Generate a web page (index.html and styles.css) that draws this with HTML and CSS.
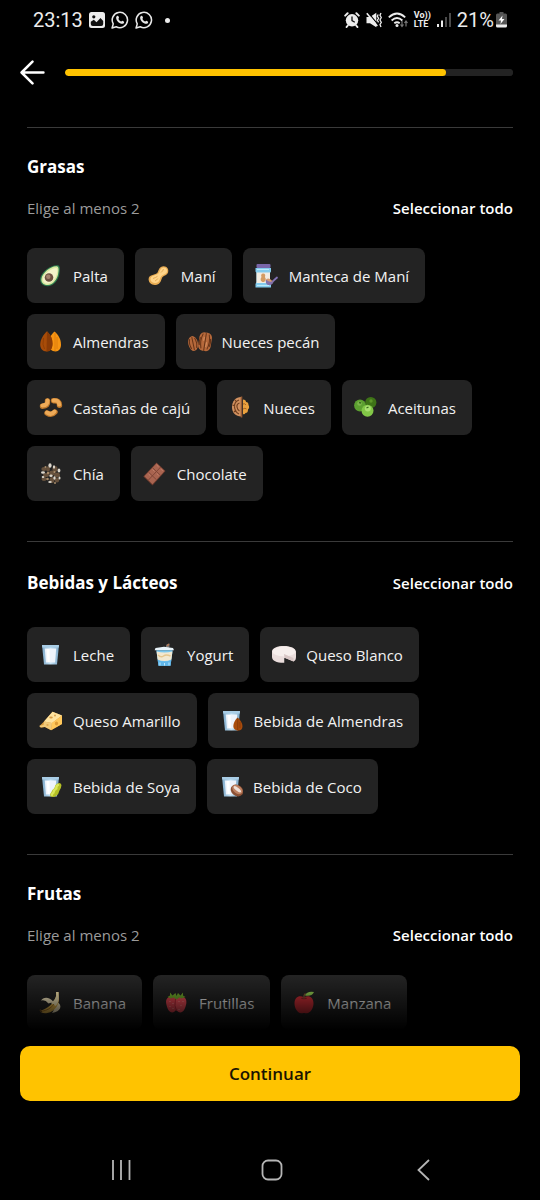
FILE: index.html
```html
<!DOCTYPE html>
<html lang="es">
<head>
<meta charset="utf-8">
<meta name="viewport" content="width=device-width, initial-scale=1">
<title>Elige tus alimentos</title>
<link rel="stylesheet" href="styles.css">
</head>
<body>
<svg class="defs" aria-hidden="true">
  <defs>
    <linearGradient id="glass-side" x1="0" x2="1" y1="0" y2="0">
      <stop offset="0" stop-color="#7ea9c9"/><stop offset=".5" stop-color="#c4e2f5"/><stop offset="1" stop-color="#7ea9c9"/>
    </linearGradient>
    <symbol id="glass" viewBox="0 0 24 24">
      <path d="M3 2h17l-2 19.500H5z" fill="url(#glass-side)"/>
      <path d="M3 2h17l-.3 2.500H3.300z" fill="#a9cde6"/>
      <path d="M5.800 5.500h11.400l-1.200 14H7z" fill="#eef3fb"/>
      <path d="M7.500 6h3l.3 13H8.500z" fill="#fff"/>
    </symbol>
    <symbol id="whatsapp" viewBox="0 0 20 20">
      <path d="M1.200 18.800 2.500 14.300A8.500 8.500 0 1 1 5.800 17.500z" fill="none" stroke="#e8e8e8" stroke-width="1.700" stroke-linejoin="round"/>
      <path d="M7.200 5.400c.5-.2.9 0 1.100.5l.6 1.500c.1.500-.8 1.200-.7 1.500.6 1.300 1.600 2.200 2.900 2.800.4.100 1-1.100 1.500-.9l1.600.8c.6.300.5 1.600-.3 2.200-2.700 1.700-8.300-2.300-8.200-6.300 0-1 .7-1.800 1.500-2.100z" fill="#e8e8e8"/>
    </symbol>
  </defs>
</svg>

<div class="status">
  <div class="status-group">
    <span class="status-text">23:13</span>
    <svg class="ico-photo" viewBox="0 0 16 16" aria-hidden="true"><rect width="16" height="16" rx="2.500" fill="#ececec"/><circle cx="4.800" cy="4.800" r="1.600" fill="#111"/><path d="M1.800 12V9.800l3-2 2.700 2.400 4-4.200L14.200 9v3q0 2-2 2H3.800q-2 0-2-2z" fill="#111"/></svg>
    <svg class="ico-chat" aria-hidden="true"><use href="#whatsapp"/></svg>
    <svg class="ico-chat" aria-hidden="true"><use href="#whatsapp"/></svg>
    <span class="status-dot"></span>
  </div>
  <div class="status-group status-group--right">
    <svg class="ico-alarm" viewBox="0 0 16 16" aria-hidden="true"><g stroke="#ececec" stroke-width="2" stroke-linecap="round"><path d="M1.200 3.600 3.600 1.300M14.800 3.600 12.400 1.300M3.800 13.500 2.600 15M12.200 13.500l1.200 1.500"/></g><circle cx="8" cy="8.300" r="6.200" fill="#ececec"/><path d="M8 4.600v4l2.800 1.600" fill="none" stroke="#111" stroke-width="1.300"/></svg>
    <svg class="ico-mute" viewBox="0 0 16 16" aria-hidden="true"><path d="M.5 5h3.500L10.300.8v14.400L4 11.200H.5z" fill="#ececec"/><path d="m2.200.700 9.600 11.600" stroke="#000" stroke-width="1.300"/><path d="m.8 1.200 10.500 12.800" stroke="#ececec" stroke-width="1.600"/><path d="m12.200 2.500-.9 1.800 1.300 2-1.300 2 1.300 2M15 1l-1 2.300 1.300 2.200L14 8l1.300 2.300-1.300 2.200 1 2.500" fill="none" stroke="#ececec" stroke-width="1.300"/></svg>
    <svg class="ico-wifi" viewBox="0 0 20 16" aria-hidden="true"><g fill="none" stroke="#ececec" stroke-width="1.800"><path d="M.8 5.400Q9 -2.400 17.200 5.400M3.600 8.500Q9 3.400 14.400 8.500M6.300 11.300q2.700-2.200 5.400 0"/></g><circle cx="9" cy="13.500" r="1.500" fill="#ececec"/><path d="M14 9v5.500M12.500 12.500l1.500 2 1.500-2M18 14.500V9M16.500 11l1.500-2 1.500 2" fill="none" stroke="#777" stroke-width="1.200"/></svg>
    <span class="volte"><span>Vo))</span><span>LTE</span></span>
    <svg class="ico-signal" viewBox="0 0 14 16" aria-hidden="true"><path d="M0 12h2v3H0zM4 8.500h2V15H4z" fill="#ececec"/><path d="M8 5h2v10H8zM12 1h2v14h-2z" fill="#4a4a4a"/></svg>
    <span class="status-text">21%</span>
    <svg class="ico-battery" viewBox="0 0 11 16" aria-hidden="true"><path d="M3.500 0h4v1.500h2q1.500 0 1.500 1.500V13H0V3q0-1.500 1.500-1.500h2z" fill="#555"/><path d="M0 12.500h11V14q0 1.500-1.500 1.500h-8Q0 15.500 0 14z" fill="#ececec"/><path d="M6.500 3.500 2.500 8.500H5L4.500 12l4-5H6z" fill="#fff"/></svg>
  </div>
</div>

<header class="topbar">
  <button class="back" type="button" aria-label="Atrás"><svg viewBox="0 0 24 24" aria-hidden="true"><path d="M22.500 12H2M12 1.500 1.500 12 12 22.500" fill="none" stroke="#fff" stroke-width="2.400" stroke-linecap="round" stroke-linejoin="round"/></svg></button>
  <progress class="progress" max="100" value="85" aria-label="Progreso"></progress>
</header>

<main class="content">
  <section class="group">
    <h2 class="group-title">Grasas</h2>
    <div class="group-row"><p class="hint">Elige al menos 2</p><button class="select-all" type="button">Seleccionar todo</button></div>
    <div class="chips">
      <button class="chip" type="button"><svg viewBox="0 0 24 24" aria-hidden="true"><path d="M19 1.200c2.500.5 2 5.500 1.200 9.300C19.200 16 15 22 9 22.200 3.500 22.300.5 18.500 1.300 14 2.500 8 12 .3 19 1.200z" fill="#2f7d50"/><path d="M18.200 2.400c2 .5 1.500 5 .8 8-1.100 5-5 10.300-10 10.500-4.600.2-7.300-2.800-6.500-6.500C3.600 9 12 1.600 18.200 2.400z" fill="#d8e8a0"/><path d="M17.500 4c1.500 1 .8 4.500 0 7-1.400 4.500-4.700 8.300-8.700 8.400-3.500.1-5.400-2-4.900-5C4.700 9.800 12.500 4 17.500 4z" fill="#f3f2c8"/><circle cx="10" cy="13.500" r="4.300" fill="#6e5140"/><circle cx="9.300" cy="12.700" r="2.200" fill="#a3836c"/></svg>Palta</button>
      <button class="chip" type="button"><svg viewBox="0 0 24 24" aria-hidden="true"><path d="M10.200 9c1.200-1.200 1.100-4 3.700-5.900 2.300-1.600 5.500-.9 6.800 1.400 1.300 2.400.5 5.300-1.700 6.500-2.500 1.300-3.500 1.300-4.300 3.800-.9 3-2.200 5.900-6.200 6.200-4 .3-6.900-2.500-6.900-5.700C1.600 10.600 7.600 11 10.200 9z" fill="#e8ac53"/><path d="M11.400 9.500c1.400-1.500 1.400-4.300 3.500-5.600 2-1.200 4.500-.2 5 1.700.7 2.300-.4 3.900-2.400 4.700-2.200.9-3.500 1.500-4.300 4-.8 2.700-1.700 4.600-4.500 4.800-2.800.2-5.200-1.500-5.300-4 .1-3.700 5.400-3.200 8-5.600z" fill="#ffd489"/><path d="M6 14.500q3-1 4.500-2.200M14 8.500q2-1.500 2.500-3.500M8 17q2-1 2.800-2.500" stroke="#e6ab55" fill="none"/></svg>Maní</button>
      <button class="chip" type="button"><svg viewBox="0 0 24 24" aria-hidden="true"><rect x="1.500" y="0" width="14" height="4" rx="1" fill="#7966a9"/><path d="M.5 4h15.500v3.500L15 9v9l1 2v3.500H.5V20l1-2V9l-1-1.500z" fill="#83cbed"/><path d="M1.500 8.500H15v10.500H1.500z" fill="#f2ece2"/><path d="M2 5.500h12M2 21.500h12" stroke="#bae9fa"/><path d="M8.200 9.500c2 0 2.500 2 1.700 3.500 1.800 2.500.5 5-1.700 5s-3.500-2.500-1.700-5c-.8-1.500-.3-3.500 1.700-3.500z" fill="#d49c63"/><path d="m16.500 18.500 5.500-5" stroke="#8272b4" stroke-width="1.800" stroke-linecap="round"/><path d="M11 15.500c2 1 5 1 7.500 2-.5 3-3 4-5.500 3.500-2-.6-2.700-3-2-5.500z" fill="#8370a9"/><path d="M11 15.500q3-2.500 6.500 1.700-3 1.500-6.500-1.700z" fill="#d59a70"/></svg>Manteca de Maní</button>
      <button class="chip" type="button"><svg viewBox="0 0 24 24" aria-hidden="true"><path d="M15.500 1.500c4 3.500 6.500 8 6.500 13 0 4-2 7-5.500 7S9 18 9 14c0-5 3-9 6.500-12.500z" fill="#f79513"/><path d="M16 3v18M18 7v12" stroke="#d9760a" stroke-width=".8"/><path d="M8 1.200c4 3.800 5.500 8 5.500 12.300 0 5-2 8-6 8s-6.300-3-6.300-7C1.200 9.500 4.500 4.500 8 1.200z" fill="#a84c08"/><path d="M8 1.200c4 3.800 5.500 8 5.500 12.300 0 5-2 8-6 8z" fill="#8b3c06"/><path d="M4.500 8q-1.500 7 1 11" stroke="#913f05" fill="none"/></svg>Almendras</button>
      <button class="chip" type="button"><svg viewBox="0 0 24 24" aria-hidden="true"><g transform="rotate(-12 5 13)"><ellipse cx="5" cy="13.500" rx="4.800" ry="7.500" fill="#b6693b"/><path d="M5 7v13M2.500 8.500q-2 5 0 10M7.500 8.500q2 5 0 10" fill="none" stroke="#653317"/></g><g transform="rotate(9 17 12)"><rect x="10.700" y="2.500" width="12.600" height="18.500" rx="5" fill="#b6693b"/><path d="M17 3v18M14 4q-2.500 7 0 15M20 4q2.500 7 0 15M11.800 8q-1 4 0 8M22 8q1 4 0 8" fill="none" stroke="#653317"/><path d="M15.500 7v4M18.500 12v5" stroke="#d69060"/></g></svg>Nueces pecán</button>
      <button class="chip" type="button"><svg viewBox="0 0 24 24" aria-hidden="true"><g fill="none" stroke-linecap="round" stroke-linejoin="round"><path d="M8.500 5q.8 5-5 5.200M14.500 4.800q6-.5 6 4.500M8 17q4.500 3 8-1" stroke="#bf782a" stroke-width="5.400"/><path d="M8.500 4.500q.5 4.500-5 5M14.700 4.500q5.300-.5 5.500 4M8 16.500q4.500 3 7.500-1" stroke="#edaa58" stroke-width="4"/></g></svg>Castañas de cajú</button>
      <button class="chip" type="button"><svg viewBox="0 0 24 24" aria-hidden="true"><path d="M12 1c-5 0-9 4-9 10s4 9.500 9 9.500z" fill="#d1905f"/><path d="M10 4Q5 6 5.500 11t4.500 7M10.500 7Q7.500 8 8 11t2.500 4M3.500 9l2.500 1M5 16l2-2M6 4l1.500 2" stroke="#71401f" stroke-width="1.200" fill="none"/><path d="M14 3.500q3 0 3 2.500 2.500 0 2.500 3 1.500 2.500-.5 4.500 0 3.500-2.500 3.500-1 2-2.500 1z" fill="#eaa13e"/><path d="M14 8q2-1 3 1M14 13q2-1.500 3.500 0" stroke="#a96424" fill="none"/><path d="M12.500.5v21" stroke="#955a33" stroke-width="1.600"/></svg>Nueces</button>
      <button class="chip" type="button"><svg viewBox="0 0 24 24" aria-hidden="true"><circle cx="16.800" cy="6.500" r="5.600" fill="#3e7317"/><circle cx="17" cy="5" r="1.700" fill="#5d9629"/><circle cx="6" cy="9.500" r="5.900" fill="#5c9f30"/><circle cx="5.500" cy="7.500" r="2.300" fill="#7cb54b"/><circle cx="13.500" cy="14.800" r="6" fill="#82c747"/><circle cx="13.800" cy="12.500" r="3" fill="#aae071"/><path d="M5 6.500l2 .5M12.500 12l2-1" stroke="#376b1c" stroke-width="1.300"/></svg>Aceitunas</button>
      <button class="chip" type="button"><svg viewBox="0 0 24 24" aria-hidden="true"><g fill="#66513d"><ellipse cx="5" cy="7" rx="2.700" ry="2"/><ellipse cx="9" cy="7" rx="2" ry="2.700"/><ellipse cx="16" cy="7" rx="2.600" ry="3"/><ellipse cx="7" cy="13" rx="3" ry="2"/><ellipse cx="13" cy="11" rx="3" ry="2.500"/><ellipse cx="18" cy="13" rx="3" ry="2.500"/><ellipse cx="5" cy="17" rx="2.500" ry="2"/><ellipse cx="13" cy="18" rx="2.500" ry="3"/><ellipse cx="18" cy="18" rx="2.200" ry="2.500"/></g><g fill="#ddd7cc"><ellipse cx="11" cy="3.500" rx="1.600" ry="2.200"/><ellipse cx="15" cy="5" rx="1.100" ry="1.700"/><ellipse cx="4" cy="10.500" rx="2" ry="1.300"/><ellipse cx="20" cy="8.500" rx="1.400" ry="1.900"/><ellipse cx="12" cy="13.800" rx="1.700" ry="1.300"/><ellipse cx="4" cy="15" rx="1.300" ry=".9"/><ellipse cx="15.500" cy="16" rx="1.200" ry="1.800"/><ellipse cx="11" cy="20" rx="1.800" ry="1"/><ellipse cx="20.500" cy="16" rx="1" ry="1.500"/></g><g fill="#a78b69"><circle cx="6.500" cy="5" r="1"/><circle cx="9" cy="11" r="1.200"/><circle cx="15.500" cy="10" r="1.100"/><circle cx="8.500" cy="17" r="1.300"/><circle cx="16" cy="21" r="1"/></g></svg>Chía</button>
      <button class="chip" type="button"><svg viewBox="0 0 24 24" aria-hidden="true"><path d="M13.500.5 22.500 9 9.500 23.500.3 14.500z" fill="#68382c"/><path d="M13.600 1.300 21.700 9 9.500 22.200 1.300 14.300z" fill="#a96450"/><path d="m17.600 5.100-12.200 13M9.500 5.700l8.100 7.700M5.400 10l8.100 7.800" stroke="#7d4436" stroke-width=".9"/><path d="m13.600 3 2 1.900M9.500 7.500l2 1.900M5.500 12l2 1.800M18 7.200l1.700 1.700M13.800 11.600l1.800 1.700" stroke="#c98570" stroke-width=".8"/></svg>Chocolate</button>
    </div>
  </section>

  <section class="group">
    <div class="group-row group-row--titled"><h2 class="group-title">Bebidas y Lácteos</h2><button class="select-all" type="button">Seleccionar todo</button></div>
    <div class="chips">
      <button class="chip" type="button"><svg aria-hidden="true"><use href="#glass"/></svg>Leche</button>
      <button class="chip" type="button"><svg viewBox="0 0 24 24" aria-hidden="true"><path d="m12.500 5 1-3.500 3-1v3l-1.500 3z" fill="#777"/><path d="m14 3 2-2" stroke="#b57650" stroke-width="1.400"/><path d="M2.500 5 11 3.800 20 5l1 2.200H1.700z" fill="#e8f3f9"/><path d="M3.300 7.200h16.400L17.500 22.800h-12z" fill="#7ac7ee"/><path d="M3.600 8.500q8 2 15.800 0l-1 8q-7 3-13.800 0z" fill="#f2e8d0"/><path d="M4.700 17q6.800 3 13.600 0l-.8 5.800h-12z" fill="#60b6e9"/><path d="M5 12q3 3 5.500 1t7 0" stroke="#e5c68d" stroke-width="1.400" fill="none"/><path d="M7 19.500v2.800M11.500 20v2.500M16 19.500v2.800" stroke="#bce8fb"/></svg>Yogurt</button>
      <button class="chip" type="button"><svg viewBox="0 0 24 24" aria-hidden="true"><path d="M0 8.500C0 5 5.500 3 12 3s12 2.200 12 6v5q0 3.500-2.500 4.500L12.500 15v4.800C5 20 0 18 0 14z" fill="#eadddc"/><ellipse cx="12" cy="8.500" rx="11.500" ry="5" fill="#f6eeec"/><path d="m12 11 9.500 4v3.500L12.500 15z" fill="#d8c6c5"/><path d="m12.500 15 8.500 3.800-8.500 1.200z" fill="#232323"/></svg>Queso Blanco</button>
      <button class="chip" type="button"><svg viewBox="0 0 24 24" aria-hidden="true"><path d="M13.500 2.800 5 12.500.5 17l1.500 1.700 4-.7 6 3.200L23 15V6.500z" fill="#d99a3c"/><path d="M13.500 2.800 5 12.500l8 1.500L23 6.500z" fill="#ffe4a0"/><path d="m13 14 10-7.500V15l-11 6.200z" fill="#ffc85b"/><path d="m5 12.500 8 1.500-1 7L6 18l-5 .2-.5-1.400 4-.8z" fill="#f2ca79"/><ellipse cx="12" cy="8.500" rx="1.800" ry="1" fill="#d99b44"/><circle cx="16" cy="6.500" r=".9" fill="#d99b44"/><ellipse cx="17.500" cy="14.500" rx="1.600" ry="1.900" fill="#dd9b36"/><ellipse cx="8.500" cy="16" rx="1.200" ry=".8" fill="#d99b44"/></svg>Queso Amarillo</button>
      <button class="chip" type="button"><svg viewBox="0 0 24 24" aria-hidden="true"><use href="#glass"/><path d="M17.500 8.500c3 2.500 5 6 5 8.800 0 2.800-1.500 4.200-4.300 4.200-3 0-4.900-1.700-4.900-4.300 0-2.800 1.700-6.200 4.200-8.700z" fill="#a84b0b"/><path d="M17.700 9v12.500M20 13v6" stroke="#8a3d0a" fill="none"/></svg>Bebida de Almendras</button>
      <button class="chip" type="button"><svg viewBox="0 0 24 24" aria-hidden="true"><use href="#glass"/><path d="M18.500 8.500q3-1.500 4 1.500-.3 3.500-2 5.500-.8 4-3.500 5.500-2.500 1.800-5 .5-2-1.500.3-4.200.7-2.500 3-4 .5-3.500 3.200-4.800z" fill="#b4bf26"/><path d="M19 10q-2 1-1.700 3.500-2.600 1.500-2.800 4-1.500 1-1.500 2.200" stroke="#dce75a" stroke-width="2.400" fill="none" stroke-linecap="round"/></svg>Bebida de Soya</button>
      <button class="chip" type="button"><svg viewBox="0 0 24 24" aria-hidden="true"><use href="#glass"/><g transform="rotate(38 18 15.500)"><ellipse cx="18" cy="15.500" rx="6.700" ry="5.500" fill="#8a5034"/><ellipse cx="17.700" cy="14.500" rx="5.800" ry="3.900" fill="#bd8061"/><ellipse cx="17.500" cy="14.300" rx="4.500" ry="1.600" fill="#eee0d8"/></g></svg>Bebida de Coco</button>
    </div>
  </section>

  <section class="group group--last">
    <h2 class="group-title">Frutas</h2>
    <div class="group-row"><p class="hint">Elige al menos 2</p><button class="select-all" type="button">Seleccionar todo</button></div>
    <div class="chips">
      <button class="chip" type="button"><svg viewBox="0 0 24 24" aria-hidden="true"><path d="M18 11c6 3 4 10-5 11 2-2.500 3-6 1-9z" fill="#fff1c7"/><path d="M14.500 11C10 5 4 6 2 9.500q4-1.500 7.500 3z" fill="#fff1c7"/><path d="M17 1h2.500l.3 5c1.200 6-3 14.500-11.500 16-4 .6-7-.3-7.300-2.500C8 18.500 15.500 12 17 5z" fill="#e8b94b"/><path d="M17.200 1h2.300l.2 5c.5 4-1 7-3 9l-5-3c3-2 5-4.500 5.500-7z" fill="#fff0be"/><path d="M3 20.200Q11 19 15 13" stroke="#af7926" fill="none"/><path d="m1 18.500 1.500 2.700" stroke="#65451b" stroke-width="1.600"/></svg>Banana</button>
      <button class="chip" type="button"><svg viewBox="0 0 24 24" aria-hidden="true"><path d="M6.500 5.500c-4 0-6 3-5.300 7 .8 5 3 9 6 9s5.300-4 5.300-9-2-7-6-7z" fill="#e24450"/><path d="M16 5.500c4 0 6 3 5.300 7-.8 5-3 9-6 9s-5.300-4-5.300-9 2-7 6-7z" fill="#ee4d58"/><path d="M10.500 8q-1.500 7 1 12" stroke="#b32b38" fill="none"/><path d="M5 10v1M8 12v1M5 15v1M8 17v1M14 10v1M18 10v1M16 14v1M14 18v1" stroke="#ffa4a0" stroke-width=".8"/><path d="M2.500 6 5 4.500V1.500l2.500 3 3-2.500 1 3 1.500-3 2.500 2.500 2.500-3v3L20.500 6l-4 1.500-2-1-3 2-3-2-2.500 1z" fill="#71aa2a"/></svg>Frutillas</button>
      <button class="chip" type="button"><svg viewBox="0 0 24 24" aria-hidden="true"><path d="M11 6.500c4-2.500 9.500-1 9.500 6 0 5-3.500 9.500-6.500 9.800-1.500.1-2-.4-3-.4s-1.500.5-3 .4C5 22 1.500 18 1.500 12.500c0-7 5.500-8.500 9.500-6z" fill="#cf2f36"/><ellipse cx="11" cy="7.300" rx="3" ry=".9" fill="#8c2027"/><path d="M11 7.500Q10.500 4 12.500 2.500" stroke="#805332" stroke-width="1.400" fill="none"/><path d="M12 4.500Q14-.2 21 1q-2.500 5-9 3.500z" fill="#94cf52"/></svg>Manzana</button>
    </div>
  </section>
</main>

<footer class="footer">
  <button class="continue" type="button">Continuar</button>
  <nav class="sysnav" aria-label="Sistema">
    <button type="button" aria-label="Recientes"><svg viewBox="0 0 24 24" aria-hidden="true"><path d="M4 2v20M12 2v20M20.500 2v20"/></svg></button>
    <button type="button" aria-label="Inicio"><svg viewBox="0 0 24 24" aria-hidden="true"><rect x="2.500" y="2.500" width="19" height="19" rx="5.500"/></svg></button>
    <button type="button" aria-label="Volver"><svg viewBox="0 0 24 24" aria-hidden="true"><path d="M18 2 7.500 12 18 22"/></svg></button>
  </nav>
</footer>
</body>
</html>
```
FILE: styles.css
```css
* {
  box-sizing: border-box;
}

body {
  margin: 0;
  min-height: 100vh;
  display: flex;
  flex-direction: column;
  background: #000;
  color: #fff;
  font-family: "Open Sans", "Noto Sans", sans-serif;
  font-size: 15px;
  line-height: 24px;
}

button {
  margin: 0;
  padding: 0;
  border: 0;
  background: none;
  color: inherit;
  font: inherit;
  cursor: pointer;
}

svg {
  display: block;
  flex: none;
}

.defs {
  position: absolute;
  width: 0;
  height: 0;
}

/* Status bar */
.status {
  display: flex;
  justify-content: space-between;
  align-items: center;
  height: 40px;
  padding: 0 33px;
  color: #ececec;
  font-family: Roboto, sans-serif;
}

.status-group {
  display: flex;
  align-items: center;
  gap: 6px;
}

.status-text {
  font-size: 20px;
}

.ico-photo {
  width: 16px;
  height: 16px;
}

.ico-chat {
  width: 18px;
  height: 18px;
}

.status-dot {
  width: 5px;
  height: 5px;
  margin-left: 6px;
  border-radius: 50%;
  background: #ececec;
}

.ico-alarm {
  width: 16px;
  height: 16px;
}

.ico-mute {
  width: 16px;
  height: 16px;
}

.ico-wifi {
  width: 20px;
  height: 16px;
}

.volte {
  display: flex;
  flex-direction: column;
  font-size: 9px;
  font-weight: 700;
  line-height: 9px;
}

.ico-signal {
  width: 14px;
  height: 16px;
}

.ico-battery {
  width: 11px;
  height: 16px;
  margin-left: -4px;
}

/* Back arrow and progress */
.topbar {
  display: flex;
  align-items: center;
  gap: 20px;
  padding: 20px 27px 42px 20px;
}

.back svg {
  width: 25px;
  height: 25px;
}

.progress {
  flex: 1;
  min-width: 0;
  height: 7px;
  appearance: none;
  border: 0;
  border-radius: 4px;
  background: #232323;
  overflow: hidden;
}

.progress::-webkit-progress-bar {
  background: #232323;
  border-radius: 4px;
}

.progress::-webkit-progress-value {
  background: #ffc300;
  border-radius: 4px;
}

.progress::-moz-progress-bar {
  background: #ffc300;
  border-radius: 4px;
}

/* Food groups */
.content {
  position: relative;
  flex: 1;
  padding: 0 27px;
}

.content::after {
  content: "";
  position: absolute;
  left: 0;
  right: 0;
  bottom: 0;
  height: 76px;
  background: linear-gradient(transparent 6px, #000 60px);
  pointer-events: none;
}

.group {
  padding: 27px 0 40px;
  border-top: 1px solid #3a3a3a;
}

.group--last {
  padding-bottom: 16px;
}

.group-title {
  margin: 0;
  font-size: 17px;
  font-weight: 700;
}

.group-row {
  display: flex;
  justify-content: space-between;
  align-items: center;
  margin: 17px 0 28px;
}

.group-row--titled {
  margin: 2px 0 32px;
}

.hint {
  margin: 0;
  color: #9b9b9b;
}

.select-all {
  font-weight: 600;
}

.chips {
  display: flex;
  flex-wrap: wrap;
  gap: 11px;
}

.chip {
  display: flex;
  align-items: center;
  gap: 10px;
  height: 55px;
  padding: 0 16px 0 12px;
  border-radius: 8px;
  background: #232323;
  color: #f2f2f2;
}

.chip svg {
  width: 24px;
  height: 24px;
}

/* Footer */
.footer {
  padding: 0 20px;
}

.continue {
  display: block;
  width: 100%;
  height: 55px;
  border-radius: 10px;
  background: #ffc300;
  color: #1a1400;
  font-size: 17px;
  font-weight: 600;
}

.sysnav {
  display: grid;
  grid-template-columns: repeat(3, 1fr);
  justify-items: center;
  padding: 57px 22px 18px 26px;
}

.sysnav svg {
  width: 24px;
  height: 24px;
  fill: none;
  stroke: #b5b5b5;
  stroke-width: 1.8;
}
```
